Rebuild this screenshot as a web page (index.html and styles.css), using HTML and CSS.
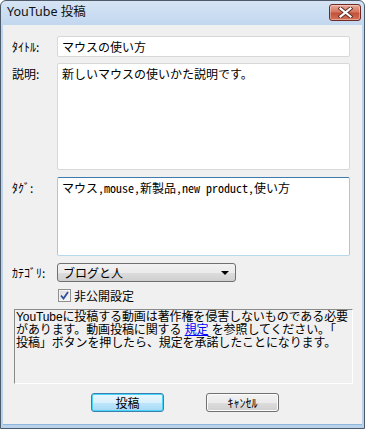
FILE: index.html
```html
<!DOCTYPE html>
<html lang="ja">
	<head>
		<meta charset="UTF-8">
		<title>YouTube 投稿</title>
		<link rel="stylesheet" href="styles.css">
	</head>
	<body>
		<div class="window">
			<div class="titlebar">
				<span class="title">YouTube 投稿</span>
				<div class="close">
					<svg width="15" height="11" viewBox="0 0 15 11">
						<path d="M2.5 1.5 L12.5 9.5 M12.5 1.5 L2.5 9.5" stroke="#5a2a22" stroke-width="4" stroke-linecap="square"/>
						<path d="M2.5 1.5 L12.5 9.5 M12.5 1.5 L2.5 9.5" stroke="#ffffff" stroke-width="2.2" stroke-linecap="square"/>
					</svg>
				</div>
			</div>
			<div class="client">
				<div class="form">
					<label class="lbl lbl-mid">ﾀｲﾄﾙ:</label>
					<div class="field field-title">マウスの使い方</div>

					<label class="lbl">説明:</label>
					<div class="field field-desc">新しいマウスの使いかた説明です。</div>

					<label class="lbl">ﾀｸﾞ:</label>
					<div class="field field-tags">マウス,mouse,新製品,new product,使い方</div>

					<label class="lbl lbl-mid">ｶﾃｺﾞﾘ:</label>
					<div class="combo">
						<span>ブログと人</span>
						<span class="arrow"></span>
					</div>

					<span></span>
					<div class="check-row">
						<span class="checkbox">
							<svg width="9" height="9" viewBox="0 0 9 9">
								<path d="M1 4.5 L3.5 7.5 L8 1" fill="none" stroke="#2c4f9e" stroke-width="1.8"/>
							</svg>
						</span>
						<span>非公開設定</span>
					</div>
				</div>

				<div class="notice">YouTubeに投稿する動画は著作権を侵害しないものである必要<br>があります。動画投稿に関する <a href="#">規定</a> を参照してください。「<br>投稿」ボタンを押したら、規定を承諾したことになります。</div>

				<div class="buttons">
					<div class="btn btn-default">投稿</div>
					<div class="btn">ｷｬﾝｾﾙ</div>
				</div>
			</div>
		</div>
	</body>
</html>
```

FILE: styles.css
```css
* {
	margin: 0;
	padding: 0;
	box-sizing: border-box;
}

body {
	width: 365px;
	height: 429px;
	background-color: #ffffff;
	font-family: "Noto Sans CJK JP", sans-serif;
	font-size: 12px;
	color: #000000;
}

.window {
	width: 365px;
	height: 429px;
	display: flex;
	flex-direction: column;
	border: 1px solid #4d5a6a;
	border-radius: 6px 6px 0 0;
	background: linear-gradient(#d6e4f4, #bcd4ee 30px, #b9d1ea);
	overflow: hidden;
}

.titlebar {
	height: 24px;
	display: flex;
	align-items: center;
	justify-content: space-between;
	padding: 0 3px 2px 6px;
}

.title {
	font-family: "Noto Sans", "Noto Sans CJK JP", sans-serif;
	font-size: 12.5px;
	color: #111111;
	line-height: 14px;
}

.close {
	width: 32px;
	height: 17px;
	margin-top: 1px;
	display: flex;
	align-items: center;
	justify-content: center;
	border: 1px solid #6f2a22;
	border-radius: 3px;
	background: linear-gradient(#e9a99b, #d5775f 45%, #c4503a 55%, #d3735a);
	box-shadow: inset 0 0 0 1px rgba(255, 255, 255, 0.35);
}

.client {
	flex: 1;
	margin: 0 2px 3px 2px;
	background-color: #f0f0f0;
	border-bottom: 1px solid #8fb7dc;
	display: flex;
	flex-direction: column;
}

.form {
	display: grid;
	grid-template-columns: 45px 293px;
	row-gap: 7px;
	padding: 11px 0 0 9px;
}

.lbl {
	font-size: 12px;
	line-height: 13px;
	padding-top: 4px;
	white-space: nowrap;
}

.lbl-mid {
	align-self: center;
	padding-top: 0;
}

.field {
	background-color: #ffffff;
	border: 1px solid #d8d8d8;
	border-radius: 2px;
	padding: 3px 4px;
	font-size: 12px;
	line-height: 14px;
	white-space: nowrap;
}

.field-title {
	height: 21px;
	margin-bottom: -1px;
}

.field-desc {
	height: 107px;
}

.field-tags {
	height: 79px;
	border-color: #3d7bad #a4c9e3 #b7d9ed #a4c9e3;
	font-family: "Noto Sans Mono CJK JP", "Noto Sans CJK JP", monospace;
}

.combo {
	width: 179px;
	height: 19px;
	display: flex;
	align-items: center;
	justify-content: space-between;
	padding: 0 5px 0 5px;
	border: 1px solid #707070;
	border-radius: 3px;
	background: linear-gradient(#f2f2f2, #ebebeb 50%, #dddddd 51%, #cfcfcf);
	line-height: 13px;
}

.arrow {
	width: 0;
	height: 0;
	border-left: 4px solid transparent;
	border-right: 4px solid transparent;
	border-top: 4px solid #000000;
	margin-right: 1px;
}

.check-row {
	display: flex;
	align-items: center;
	gap: 3px;
	height: 13px;
	margin-left: 1px;
	line-height: 13px;
}

.checkbox {
	width: 13px;
	height: 13px;
	display: flex;
	align-items: center;
	justify-content: center;
	border: 1px solid #8e8f8f;
	background: linear-gradient(135deg, #dcdcdc, #f8f8f8);
	box-shadow: inset 0 0 0 1px #f4f4f4;
}

.notice {
	margin: 7px 0 0 11px;
	width: 339px;
	height: 75px;
	padding: 1px 0 0 1px;
	border: 1px solid;
	border-color: #8a8a8a #ffffff #ffffff #8a8a8a;
	font-family: "Liberation Sans", "Noto Sans CJK JP", sans-serif;
	font-size: 12px;
	line-height: 13px;
	letter-spacing: -0.1px;
	white-space: nowrap;
}

.notice a {
	color: #0000ff;
}

.buttons {
	display: flex;
	gap: 42px;
	padding: 9px 0 0 88px;
}

.btn {
	width: 73px;
	height: 19px;
	display: flex;
	align-items: center;
	justify-content: center;
	border: 1px solid #707070;
	border-radius: 3px;
	background: linear-gradient(#f2f2f2, #ebebeb 50%, #dddddd 51%, #cfcfcf);
	box-shadow: inset 0 0 0 1px #fcfcfc;
	line-height: 13px;
}

.btn-default {
	border-color: #3c7fb1;
	background: linear-gradient(#eaf6fd, #d9f0fc 50%, #bee6fd 51%, #a7d9f5);
	box-shadow: inset 0 0 0 1px #48d4f7;
}
```
